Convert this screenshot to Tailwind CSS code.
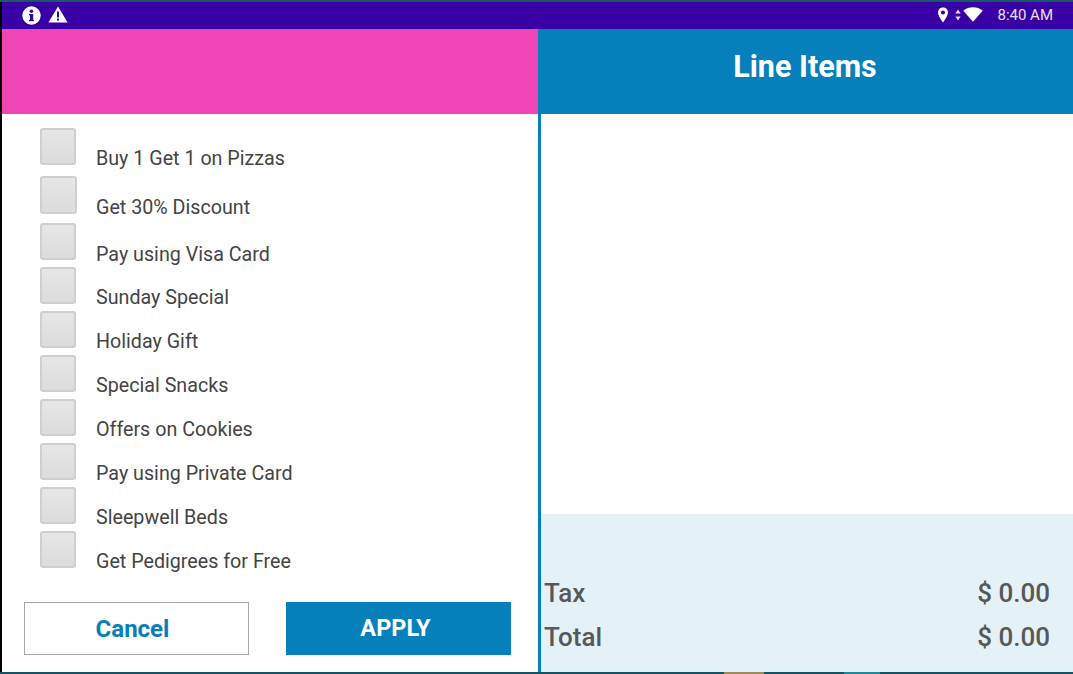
<!DOCTYPE html>
<html><head><meta charset="utf-8"><script src="https://cdn.jsdelivr.net/npm/@tailwindcss/browser@4"></script></head>
<body class="m-0 bg-white">
<div class="w-[1073px] h-[674px] overflow-hidden flex flex-col font-['Roboto',sans-serif] bg-white">
  <div class="h-[2px] bg-[#1a5a64] shrink-0"></div>
  <div class="h-[27px] shrink-0 bg-[#3900a6] flex items-center justify-between pl-[21px] pr-[20px] text-white border-l-2 border-black">
    <div class="flex items-center gap-[7px] -ml-[1px]">
      <svg width="19" height="19" viewBox="0 0 19 19"><circle cx="9.5" cy="9.5" r="9.2" fill="#fff"/><rect x="8" y="8" width="3.2" height="7" fill="#3900a6"/><rect x="7" y="8" width="3" height="1.4" fill="#3900a6"/><rect x="7" y="13.8" width="5" height="1.4" fill="#3900a6"/><circle cx="9.4" cy="5.2" r="1.8" fill="#3900a6"/></svg>
      <svg class="-mt-[2px]" width="20" height="17" viewBox="0 0 20 17"><path d="M10 0.5 L19.6 16.5 H0.4 Z" fill="#fff"/><rect x="9" y="5.5" width="2" height="6" fill="#3900a6"/><rect x="9" y="12.6" width="2" height="2" fill="#3900a6"/></svg>
    </div>
    <div class="flex items-center">
      <svg class="-mt-[2px]" width="12" height="16" viewBox="0 0 12 16"><path fill-rule="evenodd" d="M6 0.5 C2.8 0.5 1 2.8 1 5.4 C1 8.8 6 15.5 6 15.5 C6 15.5 11 8.8 11 5.4 C11 2.8 9.2 0.5 6 0.5 Z M6 3.4 A2.1 2.1 0 1 1 6 7.6 A2.1 2.1 0 1 1 6 3.4 Z" fill="#fff"/></svg>
      <svg class="ml-[6px] -mt-[2px]" width="6" height="12" viewBox="0 0 6 12"><path d="M3 0.5 L5.6 4.6 H0.4 Z M3 11.5 L5.6 7.4 H0.4 Z" fill="#e6dcf5"/></svg>
      <svg class="ml-[2px] -mt-[2px]" width="20" height="15" viewBox="0 0 20 15"><path d="M0.3 3.8 C5.5 -0.8 14.5 -0.8 19.7 3.8 L10 14.8 Z" fill="#fff"/></svg>
      <span class="ml-[14px] text-[15px] leading-none text-[#e8e0f5]">8:40 AM</span>
    </div>
  </div>
  <div class="flex-1 flex min-h-0 border-l-2 border-black">
    <div class="w-[536px] shrink-0 flex flex-col">
      <div class="h-[85px] shrink-0 bg-[#ee46b5]"></div>
      <div class="flex-1 flex flex-col pl-[38px] pt-[14px]">
        <div class="h-[48px] flex items-start gap-[20px]"><div class="w-[36px] h-[37px] shrink-0 rounded-[3px] border-2 border-[#cfcfcf] bg-linear-to-b from-[#e6e6e6] to-[#dcdcdc]"></div><span class="mt-[19px] text-[19.7px] leading-[24px] text-[#444]">Buy 1 Get 1 on Pizzas</span></div>
        <div class="h-[47px] flex items-start gap-[19px]"><div class="w-[37px] h-[38px] shrink-0 rounded-[3px] border-2 border-[#cfcfcf] bg-linear-to-b from-[#e6e6e6] to-[#dcdcdc]"></div><span class="mt-[20px] text-[19.7px] leading-[24px] text-[#444]">Get 30% Discount</span></div>
        <div class="h-[44px] flex items-start gap-[20px]"><div class="w-[36px] h-[37px] shrink-0 rounded-[3px] border-2 border-[#cfcfcf] bg-linear-to-b from-[#e6e6e6] to-[#dcdcdc]"></div><span class="mt-[20px] text-[19.7px] leading-[24px] text-[#444]">Pay using Visa Card</span></div>
        <div class="h-[44px] flex items-start gap-[20px]"><div class="w-[36px] h-[37px] shrink-0 rounded-[3px] border-2 border-[#cfcfcf] bg-linear-to-b from-[#e6e6e6] to-[#dcdcdc]"></div><span class="mt-[19px] text-[19.7px] leading-[24px] text-[#444]">Sunday Special</span></div>
        <div class="h-[44px] flex items-start gap-[20px]"><div class="w-[36px] h-[37px] shrink-0 rounded-[3px] border-2 border-[#cfcfcf] bg-linear-to-b from-[#e6e6e6] to-[#dcdcdc]"></div><span class="mt-[19px] text-[19.7px] leading-[24px] text-[#444]">Holiday Gift</span></div>
        <div class="h-[44px] flex items-start gap-[20px]"><div class="w-[36px] h-[37px] shrink-0 rounded-[3px] border-2 border-[#cfcfcf] bg-linear-to-b from-[#e6e6e6] to-[#dcdcdc]"></div><span class="mt-[19px] text-[19.7px] leading-[24px] text-[#444]">Special Snacks</span></div>
        <div class="h-[44px] flex items-start gap-[20px]"><div class="w-[36px] h-[37px] shrink-0 rounded-[3px] border-2 border-[#cfcfcf] bg-linear-to-b from-[#e6e6e6] to-[#dcdcdc]"></div><span class="mt-[19px] text-[19.7px] leading-[24px] text-[#444]">Offers on Cookies</span></div>
        <div class="h-[44px] flex items-start gap-[20px]"><div class="w-[36px] h-[37px] shrink-0 rounded-[3px] border-2 border-[#cfcfcf] bg-linear-to-b from-[#e6e6e6] to-[#dcdcdc]"></div><span class="mt-[19px] text-[19.7px] leading-[24px] text-[#444]">Pay using Private Card</span></div>
        <div class="h-[44px] flex items-start gap-[20px]"><div class="w-[36px] h-[37px] shrink-0 rounded-[3px] border-2 border-[#cfcfcf] bg-linear-to-b from-[#e6e6e6] to-[#dcdcdc]"></div><span class="mt-[19px] text-[19.7px] leading-[24px] text-[#444]">Sleepwell Beds</span></div>
        <div class="h-[44px] flex items-start gap-[20px]"><div class="w-[36px] h-[37px] shrink-0 rounded-[3px] border-2 border-[#cfcfcf] bg-linear-to-b from-[#e6e6e6] to-[#dcdcdc]"></div><span class="mt-[19px] text-[19.7px] leading-[24px] text-[#444]">Get Pedigrees for Free</span></div>
        <div class="flex -ml-[16px] mt-[27px] gap-[37px]">
          <button class="w-[225px] h-[53px] pr-[8px] bg-white border border-[#a8a8a8] text-[#0680bb] text-[24px] font-bold">Cancel</button>
          <button class="w-[225px] h-[53px] pr-[6px] bg-[#0680bb] text-white text-[23.5px] font-bold">APPLY</button>
        </div>
      </div>
    </div>
    <div class="w-[3px] shrink-0 bg-[#0680bb]"></div>
    <div class="flex-1 flex flex-col min-w-0">
      <div class="h-[85px] shrink-0 bg-[#0680bb] flex items-center justify-center pb-[9px] pr-[4px] text-white text-[30.5px] font-bold">Line Items</div>
      <div class="flex-1 bg-white"></div>
      <div class="h-[158px] shrink-0 bg-[#e4f1f7] flex flex-col justify-end pl-[3px] pr-[23px] pb-[13px] text-[#585858] text-[26px] font-medium leading-[44px]">
        <div class="flex justify-between"><span>Tax</span><span>$ 0.00</span></div>
        <div class="flex justify-between"><span>Total</span><span>$ 0.00</span></div>
      </div>
    </div>
  </div>
  <div class="h-[2px] shrink-0 bg-[#12555e] flex">
    <div class="ml-[724px] w-[40px] bg-[#a08a58]"></div>
    <div class="ml-[80px] w-[36px] bg-[#1f8a94]"></div>
  </div>
</div>
</body></html>
